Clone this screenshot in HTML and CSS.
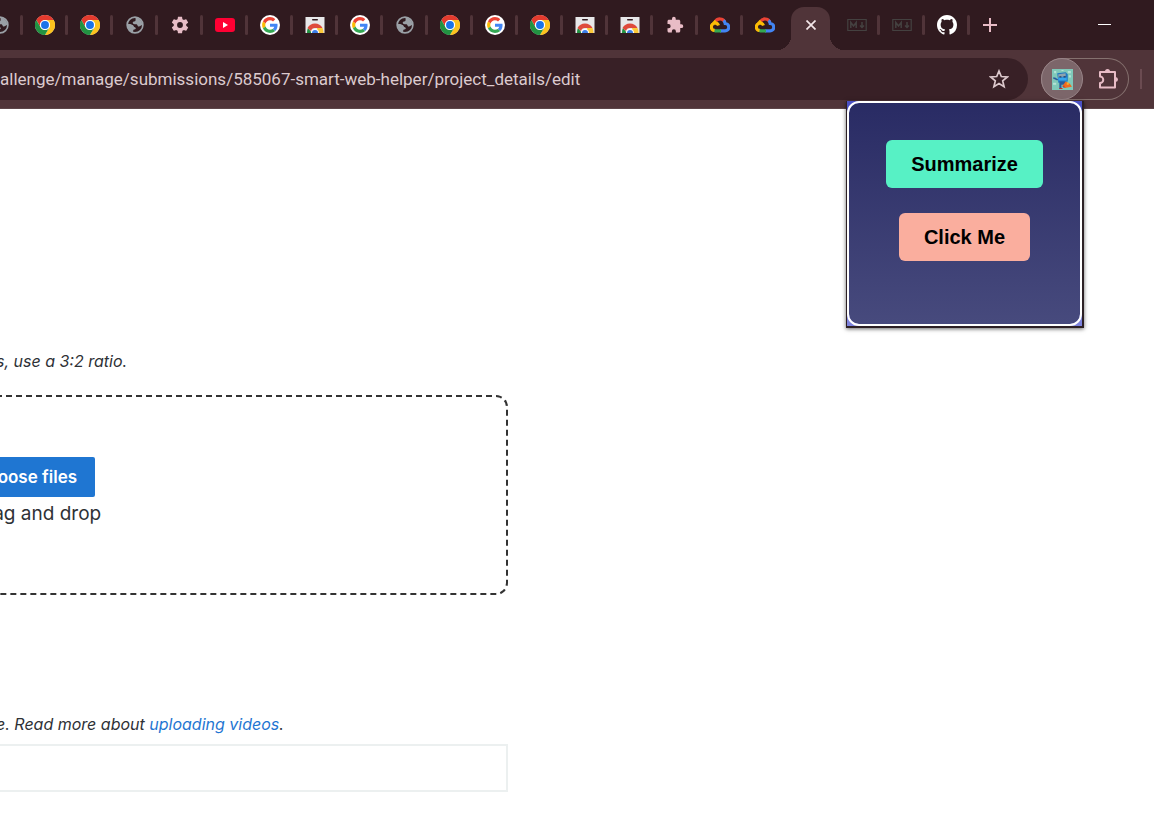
FILE: index.html
```
<!DOCTYPE html>
<html lang="en">
<head>
    <meta charset="UTF-8">
    <title>Smart Web Helper</title>
    <link rel="stylesheet" href="styles.css">
</head>
<body>
    <svg class="sprite" aria-hidden="true">
        <symbol id="chrome" viewBox="0 0 48 48">
            <circle cx="24" cy="24" r="24" fill="#fff"/>
            <path d="M3.2 12A24 24 0 0 1 44.8 12H24a12 12 0 0 0-10.4 18z" fill="#e33b2e"/>
            <path d="M44.8 12A24 24 0 0 1 24 48l10.4-18A12 12 0 0 0 24 12z" fill="#fcc31e"/>
            <path d="M24 48A24 24 0 0 1 3.2 12l10.4 18A12 12 0 0 0 34.4 30z" fill="#229342"/>
            <circle cx="24" cy="24" r="12" fill="#fff"/>
            <circle cx="24" cy="24" r="9.5" fill="#1a73e8"/>
        </symbol>
        <symbol id="globe" viewBox="0 0 24 24">
            <circle cx="12" cy="12" r="10.5" fill="#301a1f" stroke="#9aa0a6" stroke-width="2.2"/>
            <path d="M13 2c-1 3 1 3-1 5-2 1-3 0-3 2s2 2 4 2c3 0 2 3 4 3 2 0 3-2 5-2A10.500 10.500 0 0 0 13 2z" fill="#9aa0a6"/>
            <path d="M2 11c3-1 5 0 7 1 2 1 1 3 3 3 2 1 1 3-1 3-2 0-1 2-2 4A10.500 10.500 0 0 1 2 11z" fill="#9aa0a6"/>
        </symbol>
        <symbol id="gear" viewBox="0 0 24 24">
            <path fill="#e8bcc6" d="M19.430 12.980c.04-.32.070-.64.070-.98s-.03-.66-.07-.98l2.110-1.650c.19-.15.240-.42.120-.64l-2-3.460c-.12-.22-.39-.3-.61-.22l-2.490 1c-.52-.4-1.080-.73-1.690-.98l-.38-2.650C14.460 2.180 14.250 2 14 2h-4c-.25 0-.46.180-.49.420l-.38 2.650c-.61.250-1.170.590-1.690.980l-2.490-1c-.23-.09-.49 0-.61.220l-2 3.460c-.13.220-.07.490.12.640l2.110 1.650c-.04.320-.07.650-.07.980s.03.660.070.980l-2.110 1.650c-.19.150-.24.420-.12.640l2 3.460c.12.220.390.300.610.220l2.490-1c.52.400 1.080.730 1.690.980l.38 2.650c.03.240.240.420.490.420h4c.25 0 .46-.18.490-.42l.38-2.650c.61-.25 1.170-.59 1.690-.98l2.490 1c.23.090.490 0 .61-.22l2-3.460c.12-.22.070-.49-.12-.64l-2.110-1.650zM12 15.500A3.500 3.500 0 1 1 12 8.500a3.500 3.500 0 0 1 0 7z"/>
        </symbol>
        <symbol id="youtube" viewBox="0 0 20 20">
            <rect y="3" width="20" height="14" rx="3" fill="#ff0033"/>
            <path d="M8 7l5 3-5 3z" fill="#fff"/>
        </symbol>
        <symbol id="google" viewBox="0 0 48 48">
            <circle cx="24" cy="24" r="24" fill="#fff"/>
            <g transform="translate(5 5) scale(.79)">
                <path fill="#ea4335" d="M24 9.500c3.540 0 6.710 1.220 9.210 3.600l6.850-6.850C35.900 2.380 30.470 0 24 0 14.620 0 6.510 5.380 2.560 13.220l7.980 6.190C12.430 13.720 17.740 9.500 24 9.500z"/>
                <path fill="#4285f4" d="M46.980 24.550c0-1.570-.15-3.090-.38-4.550H24v9.020h12.940c-.58 2.960-2.260 5.480-4.780 7.180l7.730 6c4.510-4.180 7.090-10.360 7.090-17.650z"/>
                <path fill="#fbbc05" d="M10.530 28.590c-.48-1.450-.76-2.990-.76-4.590s.27-3.140.76-4.590l-7.980-6.190C.92 16.460 0 20.120 0 24c0 3.880.92 7.540 2.560 10.780l7.970-6.190z"/>
                <path fill="#34a853" d="M24 48c6.480 0 11.930-2.130 15.890-5.810l-7.730-6c-2.150 1.450-4.920 2.300-8.160 2.300-6.260 0-11.570-4.220-13.470-9.910l-7.980 6.190C6.510 42.620 14.620 48 24 48z"/>
            </g>
        </symbol>
        <symbol id="store" viewBox="0 0 20 20">
            <path d="M.5 2h19v16H.5z" fill="#e8e8ea"/>
            <rect x="7" y="4" width="6" height="1.500" rx=".7" fill="#301a1f"/>
            <path d="M2 18a8 8 0 0 1 1-5l4 5z" fill="#229342"/>
            <path d="M2.500 13a8.500 8.500 0 0 1 15 0H10a4 4 0 0 0-4 3z" fill="#de4a3c"/>
            <path d="M17.500 13a9 9 0 0 1 1 5H13l-1-5z" fill="#fcc93a"/>
            <path d="M6 18a4 4 0 0 1 8 0z" fill="#fff"/>
            <path d="M7 18a3 3 0 0 1 6 0z" fill="#3b7de8"/>
        </symbol>
        <symbol id="puzzle" viewBox="0 0 24 24">
            <path fill="#e8bcc6" d="M20.500 11H19V7c0-1.100-.9-2-2-2h-4V3.500a2.500 2.500 0 0 0-5 0V5H4c-1.100 0-2 .9-2 2v3.800h1.500a2.700 2.700 0 0 1 0 5.400H2V20c0 1.100.9 2 2 2h3.800v-1.500a2.700 2.700 0 0 1 5.400 0V22H17c1.100 0 2-.9 2-2v-4h1.500a2.500 2.500 0 0 0 0-5z"/>
        </symbol>
        <symbol id="cloud" viewBox="0 0 20 20">
            <g fill="none" stroke-width="3.200">
                <path d="M5.500 6.500A5.300 5.300 0 0 1 14.800 7" stroke="#ea4335"/>
                <path d="M13.500 5.500c1.200.8 1.500 2 1.700 3a3.700 3.700 0 0 1-.2 7.400H10" stroke="#4285f4"/>
                <path d="M11 15.900H5.500L3.500 15" stroke="#34a853"/>
                <path d="M4.500 15.500A3.700 3.700 0 1 1 8.500 10.500M3 9l3-3" stroke="#fbbc05"/>
            </g>
        </symbol>
        <symbol id="markdown" viewBox="0 0 20 14">
            <path d="M.8 1.500h18.400v11H.8z" fill="none" stroke="#444140" stroke-width="1.200"/>
            <path d="M3.800 10V4.500L6.500 8l2.700-3.500V10M15 4v5.500M13 7.500l2 2 2-2" fill="none" stroke="#444140" stroke-width="1.500"/>
        </symbol>
        <symbol id="github" viewBox="0 0 16 16">
            <path fill="#fff" d="M8 0C3.580 0 0 3.580 0 8c0 3.540 2.290 6.530 5.470 7.590.4.070.550-.17.550-.38 0-.19-.01-.82-.01-1.490-2.010.370-2.530-.49-2.690-.94-.09-.23-.48-.94-.82-1.130-.28-.15-.68-.52-.01-.53.630-.01 1.080.580 1.230.820.720 1.210 1.870.870 2.330.660.070-.52.280-.87.510-1.070-1.780-.2-3.640-.89-3.640-3.950 0-.87.310-1.590.820-2.150-.08-.2-.36-1.020.080-2.120 0 0 .67-.21 2.200.820.640-.18 1.320-.27 2-.27s1.360.09 2 .27c1.530-1.040 2.200-.82 2.200-.82.440 1.100.160 1.920.080 2.120.510.560.820 1.270.820 2.150 0 3.070-1.870 3.750-3.650 3.950.290.250.540.730.540 1.480 0 1.070-.01 1.930-.01 2.200 0 .21.150.460.550.380A8.010 8.010 0 0 0 16 8c0-4.420-3.580-8-8-8z"/>
        </symbol>
    </svg>

    <header class="browser">
        <nav class="tabs" aria-label="Tabs">
            <a class="tab" href="#" aria-label="Tab"><svg class="icon small"><use href="#globe"/></svg></a>
            <a class="tab" href="#" aria-label="Chrome"><svg class="icon"><use href="#chrome"/></svg></a>
            <a class="tab" href="#" aria-label="Chrome"><svg class="icon"><use href="#chrome"/></svg></a>
            <a class="tab" href="#" aria-label="Tab"><svg class="icon small"><use href="#globe"/></svg></a>
            <a class="tab" href="#" aria-label="Settings"><svg class="icon"><use href="#gear"/></svg></a>
            <a class="tab" href="#" aria-label="YouTube"><svg class="icon"><use href="#youtube"/></svg></a>
            <a class="tab" href="#" aria-label="Google"><svg class="icon"><use href="#google"/></svg></a>
            <a class="tab" href="#" aria-label="Web Store"><svg class="icon"><use href="#store"/></svg></a>
            <a class="tab" href="#" aria-label="Google"><svg class="icon"><use href="#google"/></svg></a>
            <a class="tab" href="#" aria-label="Tab"><svg class="icon small"><use href="#globe"/></svg></a>
            <a class="tab" href="#" aria-label="Chrome"><svg class="icon"><use href="#chrome"/></svg></a>
            <a class="tab" href="#" aria-label="Google"><svg class="icon"><use href="#google"/></svg></a>
            <a class="tab" href="#" aria-label="Chrome"><svg class="icon"><use href="#chrome"/></svg></a>
            <a class="tab" href="#" aria-label="Web Store"><svg class="icon"><use href="#store"/></svg></a>
            <a class="tab" href="#" aria-label="Web Store"><svg class="icon"><use href="#store"/></svg></a>
            <a class="tab" href="#" aria-label="Extensions"><svg class="icon small"><use href="#puzzle"/></svg></a>
            <a class="tab" href="#" aria-label="Google Cloud"><svg class="icon"><use href="#cloud"/></svg></a>
            <a class="tab last" href="#" aria-label="Google Cloud"><svg class="icon"><use href="#cloud"/></svg></a>
            <div class="tab-active">
                <button class="close" type="button" aria-label="Close tab"><svg viewBox="0 0 10 10" width="10" height="10"><path d="M.5.5l9 9M9.500.5l-9 9" stroke="#f3e6e9" stroke-width="1.700"/></svg></button>
            </div>
            <a class="tab" href="#" aria-label="Markdown"><svg class="icon"><use href="#markdown"/></svg></a>
            <a class="tab" href="#" aria-label="Markdown"><svg class="icon"><use href="#markdown"/></svg></a>
            <a class="tab" href="#" aria-label="GitHub"><svg class="icon"><use href="#github"/></svg></a>
            <button class="new-tab" type="button" aria-label="New tab"><svg viewBox="0 0 14 14" width="14" height="14"><path d="M7 0v14M0 7h14" stroke="#e8bcc6" stroke-width="2"/></svg></button>
            <button class="minimize" type="button" aria-label="Minimize"></button>
        </nav>
        <div class="toolbar">
            <div class="address">
                <input class="url" type="text" aria-label="Address" value="allenge/manage/submissions/585067-smart-web-helper/project_details/edit">
                <button class="star" type="button" aria-label="Bookmark"><svg viewBox="0 0 20 20" width="20" height="20"><path d="M10 2l2.300 5.500 6 .5-4.600 3.900 1.400 5.800L10 14.600l-5.100 3.100 1.400-5.800L1.700 8l6-.5z" fill="none" stroke="#dcc8cc" stroke-width="1.700"/></svg></button>
            </div>
            <div class="extensions">
                <button class="helper" type="button" aria-label="Smart Web Helper">
                    <svg viewBox="0 0 20 20" width="21" height="21">
                        <path d="M0 0h20v20H0z" fill="#7fc9b9"/>
                        <path d="M2 2h2v2H2zM15 2h3v2h-3zM1 13h3v2H1zM16 6h2v2h-2zM9 1h2v1H9z" fill="#b5e3d5"/>
                        <path d="M5 4l8-1 2 2v7l-9 1z" fill="#1f78c2"/>
                        <path d="M6 5l7-1v3l-7 1z" fill="#8fa3ad"/>
                        <path d="M6 8h8v3H6z" fill="#35a5ec"/>
                        <path d="M7 7h2v1H7zM11 7h2v1h-2z" fill="#263c63"/>
                        <path d="M1 8h2l3 2-1 1-4-2zM7 12h6v3H7zM7 15h2v4H7zM11 15h2v3h-2z" fill="#2a5b9a"/>
                        <path d="M13 12l4 2 2 3-7 1-2-2z" fill="#ee6a20"/>
                        <path d="M14 13h2v2h-2z" fill="#f7b32b"/>
                        <path d="M10 16h2v1h-2zM7 18h3v1H7z" fill="#c8312c"/>
                    </svg>
                </button>
                <button class="puzzle" type="button" aria-label="Extensions"><svg viewBox="0 0 22 22" width="22" height="22"><path d="M3 4h15v15.500H3v-4.500a3.200 3.200 0 0 0 0-6.500z" fill="none" stroke="#e8bcc6" stroke-width="2" stroke-linejoin="round"/><path d="M8 3.500a2.500 2.500 0 0 1 5 0zM18.500 9a2.500 2.500 0 0 1 0 5z" fill="#e8bcc6"/></svg></button>
            </div>
            <span class="divider"></span>
        </div>
    </header>

    <main class="page">
        <p class="hint">s, use a 3:2 ratio.</p>
        <section class="dropzone">
            <button class="choose" type="button">Choose files</button>
            <p class="drag">or drag and drop</p>
        </section>
        <label class="hint" for="video">e. Read more about <a href="#">uploading videos</a>.</label>
        <input class="video" id="video" type="text">
    </main>

    <aside class="popup">
        <div class="popup-body">
            <button class="action summarize" type="button">Summarize</button>
            <button class="action click-me" type="button">Click Me</button>
        </div>
    </aside>
</body>
</html>
```
FILE: styles.css
```
* {
    box-sizing: border-box;
}

body {
    margin: 0;
    background: #ffffff;
    color: #2e3136;
    font-family: Inter, "Liberation Sans", sans-serif;
    overflow-x: hidden;
}

button {
    border: 0;
    padding: 0;
    background: none;
    font-family: inherit;
}

svg {
    display: block;
}

.sprite {
    display: none;
}

/* tab strip */
.tabs {
    display: flex;
    height: 50px;
    padding-right: 43px;
    margin-left: -22px;
    background: #301a1f;
}

.tab {
    display: flex;
    flex: none;
    align-items: center;
    width: 45px;
    padding-left: 2px;
}

.tab::after {
    content: "";
    width: 3px;
    height: 20px;
    border-radius: 2px;
    background: #503439;
}

.tab.last::after {
    background: none;
}

.icon {
    width: 20px;
    height: 20px;
    margin: 0 auto;
}

.icon.small {
    width: 18px;
    height: 18px;
}

.tab-active {
    position: relative;
    display: flex;
    flex: none;
    align-items: center;
    justify-content: center;
    width: 39px;
    height: 43px;
    margin: 7px 5px 0 3px;
    padding-bottom: 7px;
    border-radius: 13px 13px 0 0;
    background: #503439;
}

.tab-active::before,
.tab-active::after {
    content: "";
    position: absolute;
    bottom: 0;
    width: 14px;
    height: 14px;
}

.tab-active::before {
    right: 100%;
    background: radial-gradient(circle at 0 0, transparent 14px, #503439 14px);
}

.tab-active::after {
    left: 100%;
    background: radial-gradient(circle at 100% 0, transparent 14px, #503439 14px);
}

.new-tab {
    display: flex;
    align-items: center;
    padding: 0 13px;
}

.minimize {
    width: 13px;
    height: 1px;
    margin: 24px 0 0 auto;
    background: #ffffff;
}

/* toolbar */
.toolbar {
    display: flex;
    align-items: center;
    height: 59px;
    padding: 0 12px 0 0;
    border-bottom: 1px solid #5d4549;
    background: #503439;
}

.address {
    display: flex;
    flex: 1;
    align-items: center;
    height: 42px;
    padding-right: 19px;
    border-radius: 0 21px 21px 0;
    background: #382026;
}

.url {
    flex: 1;
    min-width: 0;
    height: 42px;
    padding: 0;
    border: 0;
    outline: 0;
    background: none;
    color: #dccace;
    font: 17px Roboto, "Open Sans", sans-serif;
}

.extensions {
    display: flex;
    align-items: center;
    width: 88px;
    height: 42px;
    margin: 0 11px 0 13px;
    border-radius: 21px;
    box-shadow: inset 0 0 0 1px #85716f;
}

.helper {
    display: flex;
    align-items: center;
    justify-content: center;
    width: 42px;
    height: 42px;
    border: 1px solid #998589;
    border-radius: 50%;
    background: #7c666a;
}

.puzzle {
    margin-left: 14px;
}

.divider {
    width: 2px;
    height: 20px;
    background: #6b4b51;
}

/* page under the toolbar */
.page {
    width: 44%;
    padding-top: 240px;
}

.hint {
    display: block;
    margin: 0 0 0 -4px;
    font-size: 16px;
    font-style: italic;
    line-height: 24px;
    white-space: nowrap;
}

.hint a {
    color: #1f76d2;
    text-decoration: none;
}

.dropzone {
    display: flex;
    flex-direction: column;
    align-items: center;
    height: 200px;
    margin: 22px 0 117px -456px;
    padding-top: 60px;
    border: 2px dashed #333333;
    border-radius: 12px;
}

.choose {
    height: 40px;
    padding: 0 18px;
    border-radius: 2px;
    background: #1f76d2;
    color: #ffffff;
    font-size: 17px;
    font-weight: 600;
}

.drag {
    margin: 4px 0 0;
    font-size: 19px;
    line-height: 26px;
}

.video {
    display: block;
    width: 100%;
    height: 48px;
    margin-top: 8px;
    border: 2px solid #ecf0f0;
    border-left: 0;
    background: #ffffff;
}

/* extension popup */
.popup {
    position: absolute;
    top: 101px;
    right: 70px;
    width: 238px;
    border: solid #2c2024;
    border-width: 0 2px 2px 1px;
    background: linear-gradient(#4b50c4, #7d82dc);
    box-shadow: 0 1px 4px #00000099;
}

.popup-body {
    display: flex;
    flex-direction: column;
    align-items: center;
    gap: 25px;
    height: 225px;
    padding-top: 37px;
    border: 2px solid #ffffff;
    border-radius: 12px;
    background: linear-gradient(#292b64, #474a7d) padding-box;
}

.action {
    height: 48px;
    padding: 0 25px;
    border-radius: 6px;
    color: #000000;
    font: bold 20px "Liberation Sans", Arial, sans-serif;
}

.summarize {
    background: #57f1c5;
}

.click-me {
    background: #faae9e;
}
```
